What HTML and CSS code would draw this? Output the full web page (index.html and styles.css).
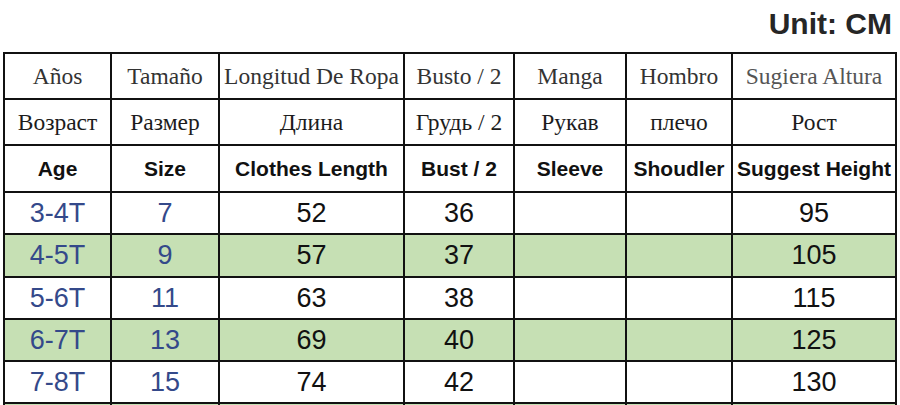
FILE: index.html
```html
<!DOCTYPE html>
<html lang="en">
<head>
<meta charset="utf-8">
<title>Size chart</title>
<link rel="stylesheet" href="styles.css">
</head>
<body>
<div class="page">
  <div class="unit">Unit: CM</div>
  <table class="chart">
    <colgroup>
      <col class="c1"><col class="c2"><col class="c3"><col class="c4"><col class="c5"><col class="c6"><col class="c7">
    </colgroup>
    <tr class="es">
      <td>Años</td><td>Tamaño</td><td>Longitud De Ropa</td><td>Busto / 2</td><td>Manga</td><td>Hombro</td><td class="light">Sugiera Altura</td>
    </tr>
    <tr class="ru">
      <td>Возраст</td><td>Размер</td><td>Длина</td><td>Грудь / 2</td><td>Рукав</td><td>плечо</td><td>Рост</td>
    </tr>
    <tr class="en">
      <td>Age</td><td>Size</td><td>Clothes Length</td><td>Bust / 2</td><td>Sleeve</td><td>Shoudler</td><td>Suggest Height</td>
    </tr>
    <tr class="data">
      <td class="blue">3-4T</td><td class="blue">7</td><td>52</td><td>36</td><td></td><td></td><td>95</td>
    </tr>
    <tr class="data green tall">
      <td class="blue">4-5T</td><td class="blue">9</td><td>57</td><td>37</td><td></td><td></td><td>105</td>
    </tr>
    <tr class="data">
      <td class="blue">5-6T</td><td class="blue">11</td><td>63</td><td>38</td><td></td><td></td><td>115</td>
    </tr>
    <tr class="data green">
      <td class="blue">6-7T</td><td class="blue">13</td><td>69</td><td>40</td><td></td><td></td><td>125</td>
    </tr>
    <tr class="data">
      <td class="blue">7-8T</td><td class="blue">15</td><td>74</td><td>42</td><td></td><td></td><td>130</td>
    </tr>
    <tr class="data green">
      <td></td><td></td><td></td><td></td><td></td><td></td><td></td>
    </tr>
  </table>
</div>
</body>
</html>
```

FILE: styles.css
```css
html, body {
  margin: 0;
  padding: 0;
  background: #ffffff;
}

.page {
  width: 900px;
  padding: 0 0 0 3px;
  box-sizing: border-box;
}

.unit {
  font-family: "Liberation Sans", Arial, sans-serif;
  font-weight: bold;
  font-size: 30px;
  line-height: 34px;
  color: #262626;
  text-align: right;
  padding: 7px 8px 0 0;
  height: 52px;
  box-sizing: border-box;
}

.chart {
  border-collapse: collapse;
  table-layout: fixed;
  width: 894px;
}

.c1 { width: 107px; }
.c2 { width: 108px; }
.c3 { width: 185px; }
.c4 { width: 110px; }
.c5 { width: 112px; }
.c6 { width: 106px; }
.c7 { width: 164px; }

.chart td {
  border: 2px solid #111;
  text-align: center;
  vertical-align: middle;
  padding: 0;
  white-space: nowrap;
  overflow: visible;
}

.es td,
.ru td {
  height: 44px;
}

.en td {
  height: 45px;
}

.es td {
  font-family: "Liberation Serif", "Times New Roman", serif;
  font-size: 23.5px;
  color: #333;
}

.es td.light {
  color: #555;
}

.ru td {
  font-family: "Liberation Serif", "Times New Roman", serif;
  font-size: 23.5px;
  color: #1c1c1c;
}

.en td {
  font-family: "Liberation Sans", Arial, sans-serif;
  font-weight: bold;
  font-size: 21px;
  color: #111;
}

.data td {
  height: 40px;
  font-family: "Liberation Sans", Arial, sans-serif;
  font-size: 27px;
  color: #111;
}

.data.tall td {
  height: 41px;
}

.data td.blue {
  color: #34498a;
}

.green td {
  background: #c6e0b4;
}
```
